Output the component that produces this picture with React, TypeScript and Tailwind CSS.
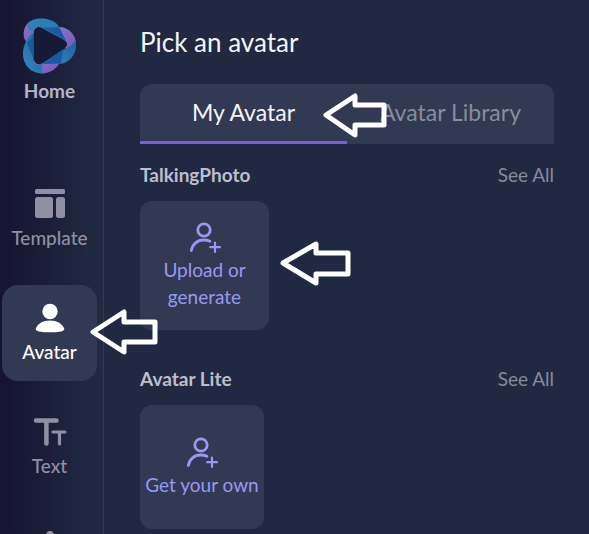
import type { ReactNode } from "react";
import clsx from "clsx";

function LogoIcon() {
  return (
    <svg viewBox="0 0 54 56" className="h-14 w-[54px]" aria-hidden="true">
      <defs>
        <linearGradient id="logoBlue" x1="0" y1="0" x2="1" y2="1">
          <stop offset="0" stopColor="#2f83b8" />
          <stop offset="0.5" stopColor="#2b7db5" />
          <stop offset="1" stopColor="#1c5fa5" />
        </linearGradient>
        <linearGradient id="logoBlueSide" x1="1" y1="0" x2="0" y2="1">
          <stop offset="0" stopColor="#1d5fa6" />
          <stop offset="1" stopColor="#338bbb" />
        </linearGradient>
        <linearGradient id="logoPurple" x1="0" y1="0" x2="1" y2="1">
          <stop offset="0" stopColor="#8577c6" />
          <stop offset="1" stopColor="#7a56b8" />
        </linearGradient>
      </defs>
      <path
        fill="url(#logoPurple)"
        d="M6 4C1 8-.5 15 1.500 21l2.500 4 7-10c0-5 3-7 7-5l-5-7Z"
      />
      <path
        fill="url(#logoPurple)"
        d="M36 9c10 0 17 8 17 17l-3 7-9-3c4-2 4-5 0-8L34 15Z"
      />
      <path
        fill="url(#logoPurple)"
        d="M11 40c0 5 3 7 8 6h17c-4 6-10 9.500-17 9.500L9 52Z"
      />
      <path
        fill="url(#logoBlue)"
        d="M5 5C9 1 14 0 20 .5c8 .5 14 4 16.500 9L43 23 18 10C13 7.500 10.500 9 10.500 14 5 12 3 8 5 5Z"
      />
      <path
        fill="url(#logoBlueSide)"
        d="M52.500 22c2 8-1 16-7 20.500-3 2.500-6 3.500-10 3.500H18l22-14c7-3 10-6 12.500-10Z"
      />
      <path
        fill="url(#logoBlueSide)"
        d="M10.500 14v26c0 6 3 8 9 5.500-1 4.500-1 7.500 1 10C8 56 0 47 0 36c0-9 4-16 10.500-22Z"
      />
      <path fill="#195ba0" d="M20 9.500h16.500L42 22ZM10.500 18v23L4 25ZM19 46l21-15-2 14.500Z" />
      <path fill="#171a34" d="M11 15c0-5 4-7 8-5l22 12.500c4 2.500 4 5 0 8L20 44.500c-5 3-9 1-9-5Z" />
    </svg>
  );
}

function TemplateIcon() {
  return (
    <svg viewBox="0 0 30 30" className="size-[30px]" fill="currentColor" aria-hidden="true">
      <rect width="30" height="5" rx="1.5" />
      <rect y="8" width="18" height="21" rx="2.5" />
      <rect x="21" y="8" width="9" height="21" rx="2.5" />
    </svg>
  );
}

function AvatarIcon() {
  return (
    <svg viewBox="0 0 30 30" className="size-[30px]" fill="currentColor" aria-hidden="true">
      <circle cx="15" cy="8.5" r="7.7" />
      <path d="M15 17.5c7 0 12 3 14 7.5 1 2-1 3-3 3.4-7 1.2-15 1.2-22 0C2 28 0 27 1 25c2-4.500 7-7.500 14-7.500Z" />
    </svg>
  );
}

function TextIcon() {
  return (
    <svg
      viewBox="0 0 34 30"
      className="h-[30px] w-[34px]"
      fill="none"
      stroke="currentColor"
      strokeLinecap="round"
      aria-hidden="true"
    >
      <path strokeWidth="4.5" d="M3 3.600h20.500M13.400 3.600V26.500" />
      <path strokeWidth="3.200" d="M20 15h12M26.500 15V27" />
    </svg>
  );
}

function ElementsIcon() {
  return (
    <svg viewBox="0 0 30 30" className="size-[30px]" fill="currentColor" aria-hidden="true">
      <path d="M12.500.8q2.500-1.800 5 0l6 9q1 2-1 2H8q-2 0-1-2Z" />
      <rect y="16" width="13" height="13" rx="2" />
      <circle cx="23" cy="22.5" r="6.5" />
    </svg>
  );
}

function AddPersonIcon() {
  return (
    <svg
      viewBox="0 0 32 32"
      className="size-8"
      fill="none"
      stroke="currentColor"
      strokeWidth="2.8"
      strokeLinecap="round"
      aria-hidden="true"
    >
      <circle cx="15" cy="8" r="6.2" />
      <path d="M2.300 28.500C3.500 22 8.500 18 14.500 18c2.500 0 4.500.4 6.500 1.300" />
      <path strokeWidth="2.2" d="M26 20.500v9.500M21.200 25.200H31" />
    </svg>
  );
}

const ARROWS = {
  tab: { size: "0 0 64 46", path: "M3 22 32 3v9h29v20H32v10Z" },
  card: { size: "0 0 72 46", path: "M3 22 36 3v9h32v21H36v9Z" },
  nav: { size: "0 0 68 46", path: "M3 23 34 3v10h31v20H34v10Z" },
};

function PointerArrow({ kind, className }: { kind: keyof typeof ARROWS; className: string }) {
  return (
    <svg
      viewBox={ARROWS[kind].size}
      className={clsx("pointer-events-none absolute z-10 h-[46px]", className)}
      fill="none"
      stroke="white"
      strokeWidth="5"
      strokeLinejoin="round"
      aria-hidden="true"
    >
      <path d={ARROWS[kind].path} />
    </svg>
  );
}

type NavItemProps = {
  label: string;
  icon: ReactNode;
  active?: boolean;
  iconOnly?: boolean;
};

function NavItem({ label, icon, active, iconOnly }: NavItemProps) {
  return (
    <button
      type="button"
      aria-label={label}
      className={clsx(
        "flex h-24 w-full shrink-0 flex-col items-center gap-[7px] rounded-2xl pt-[18px] text-[19px] leading-6 font-medium",
        active ? "bg-[#323952] text-white" : "text-[#9090a2]",
      )}
    >
      {icon}
      {!iconOnly && label}
    </button>
  );
}

function SectionHeader({ title }: { title: string }) {
  return (
    <div className="flex items-center justify-between text-[19px] leading-6">
      <h2 className="font-bold text-[#bcbfcb]">{title}</h2>
      <a href="#" className="text-[#868a9b]">
        See All
      </a>
    </div>
  );
}

export default function App() {
  return (
    <div className="relative flex h-screen overflow-hidden bg-[#212842] font-['Lato','Liberation_Sans',sans-serif]">
      <nav className="flex w-[104px] shrink-0 flex-col border-r border-[#343a55] bg-linear-to-r from-[#151430] to-[#222a44] pt-[18px] pr-1.5 pl-0.5">
        <a
          href="#"
          className="mb-[68px] flex flex-col items-center gap-[5px] text-[19px] leading-6 font-bold text-[#b5b5c3]"
        >
          <LogoIcon />
          Home
        </a>
        <div className="flex flex-col gap-[18px]">
          <NavItem label="Template" icon={<TemplateIcon />} />
          <NavItem label="Avatar" icon={<AvatarIcon />} active />
          <NavItem label="Text" icon={<TextIcon />} />
          <NavItem label="Elements" icon={<ElementsIcon />} iconOnly />
        </div>
      </nav>

      <main className="min-w-0 flex-1 pt-[26px] pr-[35px] pl-9">
        <h1 className="text-[26px] leading-8 text-[#f3f4f8]">Pick an avatar</h1>

        <div role="tablist" className="mt-[26px] flex h-[60px] rounded-t-xl bg-[#323952] text-[23px]">
          <button
            type="button"
            role="tab"
            aria-selected="true"
            className="flex-1 border-b-3 border-[#795fdc] text-[#f3f4f8]"
          >
            My Avatar
          </button>
          <button
            type="button"
            role="tab"
            aria-selected="false"
            className="flex-1 border-b-3 border-transparent text-[#888c9c]"
          >
            Avatar Library
          </button>
        </div>

        <section className="mt-[19px]">
          <SectionHeader title="TalkingPhoto" />
          <button
            type="button"
            className="mt-3.5 flex size-[129px] flex-col items-center justify-center gap-0.5 rounded-xl bg-[#323952] text-[19px] leading-[27px] text-[#9799f2]"
          >
            <AddPersonIcon />
            <span className="w-24">Upload or generate</span>
          </button>
        </section>

        <section className="mt-[37px]">
          <SectionHeader title="Avatar Lite" />
          <button
            type="button"
            className="mt-3.5 flex size-[124px] flex-col items-center justify-center gap-0.5 rounded-xl bg-[#323952] text-[19px] leading-[27px] text-[#9799f2]"
          >
            <AddPersonIcon />
            Get your own
          </button>
        </section>
      </main>

      <PointerArrow kind="tab" className="top-[93px] left-[323px] w-16" />
      <PointerArrow kind="card" className="top-[241px] left-[280px] w-[72px]" />
      <PointerArrow kind="nav" className="top-[309px] left-[90px] w-[68px]" />
    </div>
  );
}
